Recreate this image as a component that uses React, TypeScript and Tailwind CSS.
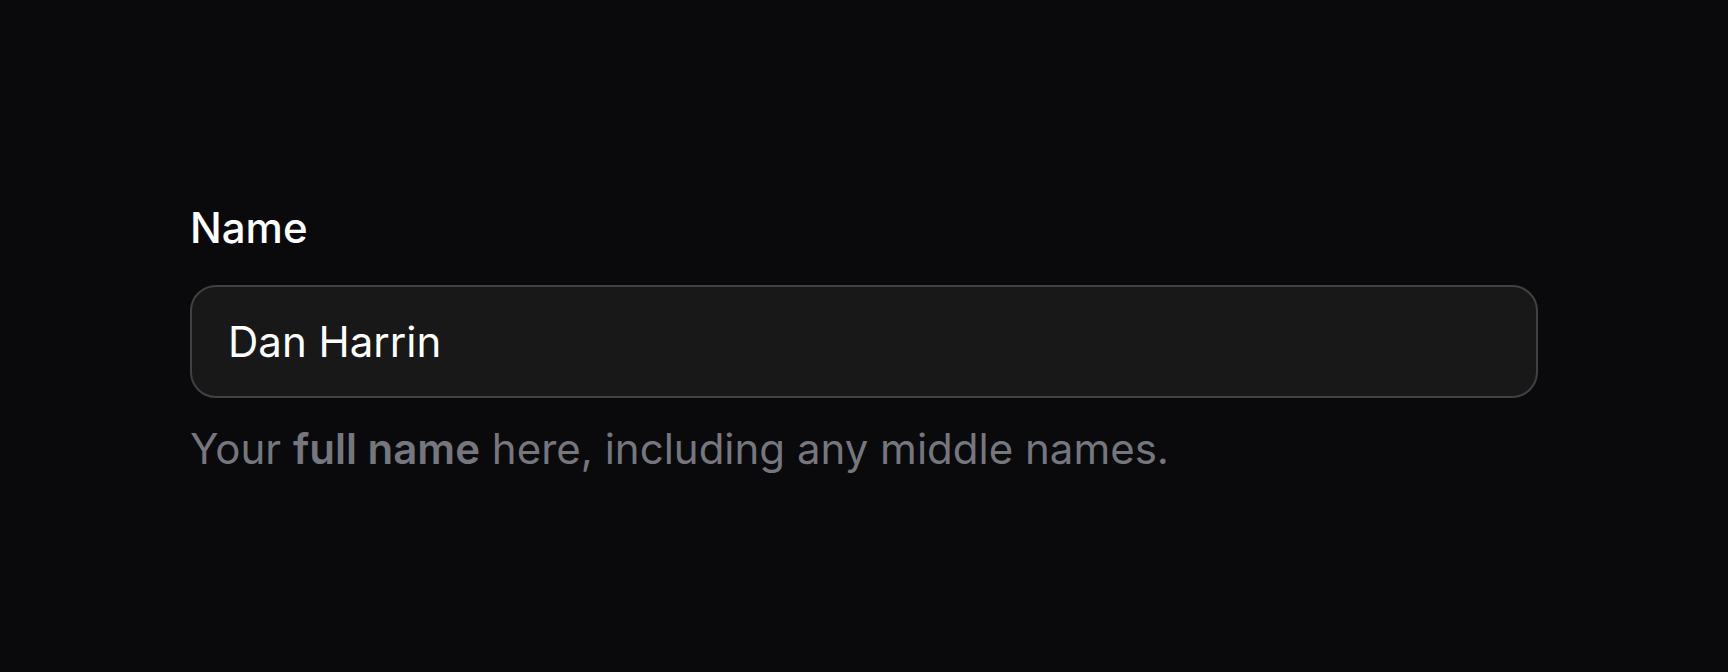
export default function App() {
  return (
    <div
      className="min-h-screen w-full bg-[#0a0a0c] pt-[198px] px-[190px]"
      style={{ fontFamily: "Inter, 'Noto Sans', sans-serif" }}
    >
      <div className="flex flex-col">
        <label htmlFor="name" className="text-[42px] leading-[60px] font-medium text-white">
          Name
        </label>

        <div className="mt-[27px] flex h-[113px] items-center rounded-[26px] border-2 border-[#414141] bg-[#181818] px-[36px]">
          <input
            id="name"
            type="text"
            defaultValue="Dan Harrin"
            className="w-full bg-transparent text-[42px] leading-[60px] text-white outline-none"
          />
        </div>

        <p className="mt-[21px] text-[42px] leading-[60px] text-[#76767e]">
          Your <span className="font-semibold">full name</span> here, including any middle names.
        </p>
      </div>
    </div>
  );
}
